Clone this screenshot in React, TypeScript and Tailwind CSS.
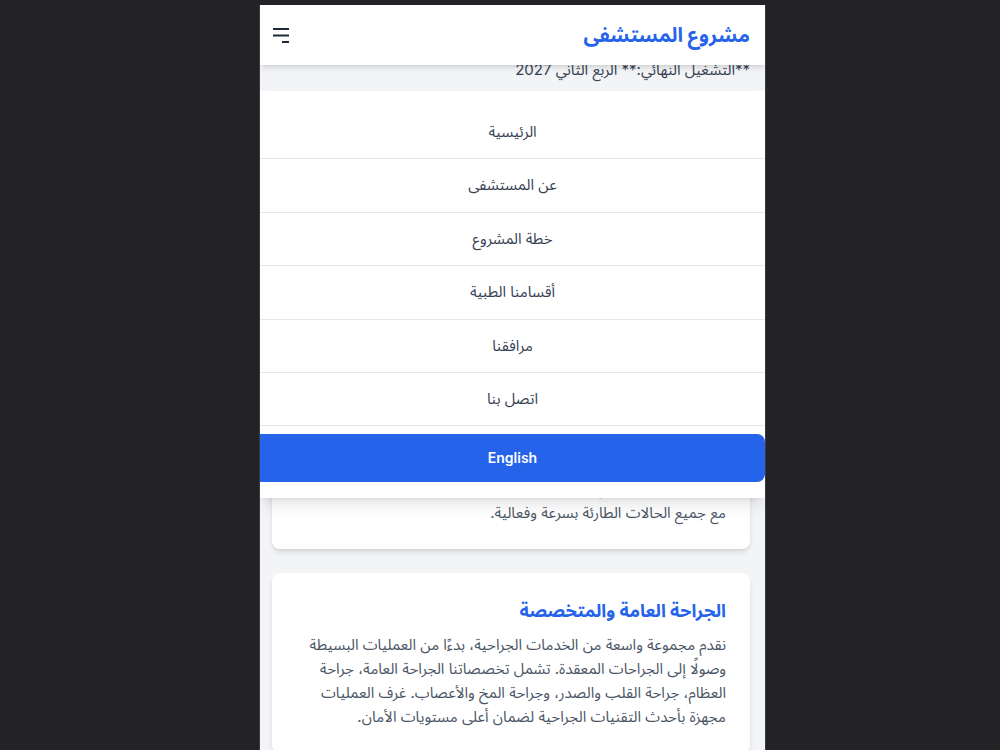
import React from 'react';

const navLinks = ['الرئيسية', 'عن المستشفى', 'خطة المشروع', 'أقسامنا الطبية', 'مرافقنا', 'اتصل بنا'];

const MenuIcon: React.FC = () => (
  <svg width="18" height="16" viewBox="0 0 18 16" fill="none" stroke="#1f2937" strokeWidth="2">
    <line x1="1" y1="2" x2="17" y2="2" />
    <line x1="1" y1="8.5" x2="17" y2="8.5" />
    <line x1="10" y1="15" x2="17" y2="15" />
  </svg>
);

const App: React.FC = () => {
  return (
    <div
      className="min-h-screen bg-[#232227] pt-[5px]"
      style={{ fontFamily: 'Inter, "Noto Sans Arabic", sans-serif' }}
    >
      <div dir="rtl" className="relative ml-[259px] h-[745px] w-[507px] overflow-hidden border-x border-[#3a393f] bg-gray-100">
        <header className="relative z-20 flex h-[60px] items-center justify-between bg-white pl-3 pr-[15px] shadow-md">
          <h1 className="text-xl font-bold text-[#2563eb]">مشروع المستشفى</h1>
          <button className="text-gray-800">
            <MenuIcon />
          </button>
        </header>

        {/* page content, scrolled under the header */}
        <main className="pl-3 pr-[15px]">
          <p className="-mt-[7px] text-[15px] leading-6 text-gray-700">
            **التشغيل النهائي:** الربع الثاني 2027
          </p>

          <div className="mt-[60px] mb-[215px] text-center">
            <h2 className="text-3xl font-bold text-gray-800">أقسامنا الطبية</h2>
          </div>

          <div className="flex flex-col gap-6">
            <div className="rounded-lg bg-white p-6 shadow-md">
              <h3 className="mb-2 text-lg font-bold text-[#2563eb]">قسم الطوارئ</h3>
              <p className="text-[15px] leading-6 text-gray-600">
                يعمل قسم الطوارئ على مدار الساعة طوال أيام الأسبوع، ومجهز بأحدث المعدات الطبية وفريق متخصص للتعامل
                <br />
                مع جميع الحالات الطارئة بسرعة وفعالية.
              </p>
            </div>

            <div className="rounded-lg bg-white p-6 shadow-md">
              <h3 className="mb-2 text-lg font-bold text-[#2563eb]">الجراحة العامة والمتخصصة</h3>
              <p className="text-[15px] leading-6 text-gray-600">
                نقدم مجموعة واسعة من الخدمات الجراحية، بدءًا من العمليات البسيطة وصولًا إلى الجراحات المعقدة. تشمل
                تخصصاتنا الجراحة العامة، جراحة العظام، جراحة القلب والصدر، وجراحة المخ والأعصاب. غرف العمليات مجهزة
                بأحدث التقنيات الجراحية لضمان أعلى مستويات الأمان.
              </p>
            </div>
          </div>
        </main>

        {/* mobile nav dropdown */}
        <nav className="absolute left-0 right-0 top-[86px] z-10 bg-white pt-[15px] pb-4 shadow-lg">
          {navLinks.map((link) => (
            <a
              key={link}
              href="#"
              className="block border-b border-gray-200 py-4 text-center text-[15px] leading-[20.4px] text-gray-700"
            >
              {link}
            </a>
          ))}
          <button className="mt-2 h-12 w-full rounded-r-lg bg-[#2563eb] text-sm font-semibold text-white">
            English
          </button>
        </nav>
      </div>
    </div>
  );
};

export default App;
